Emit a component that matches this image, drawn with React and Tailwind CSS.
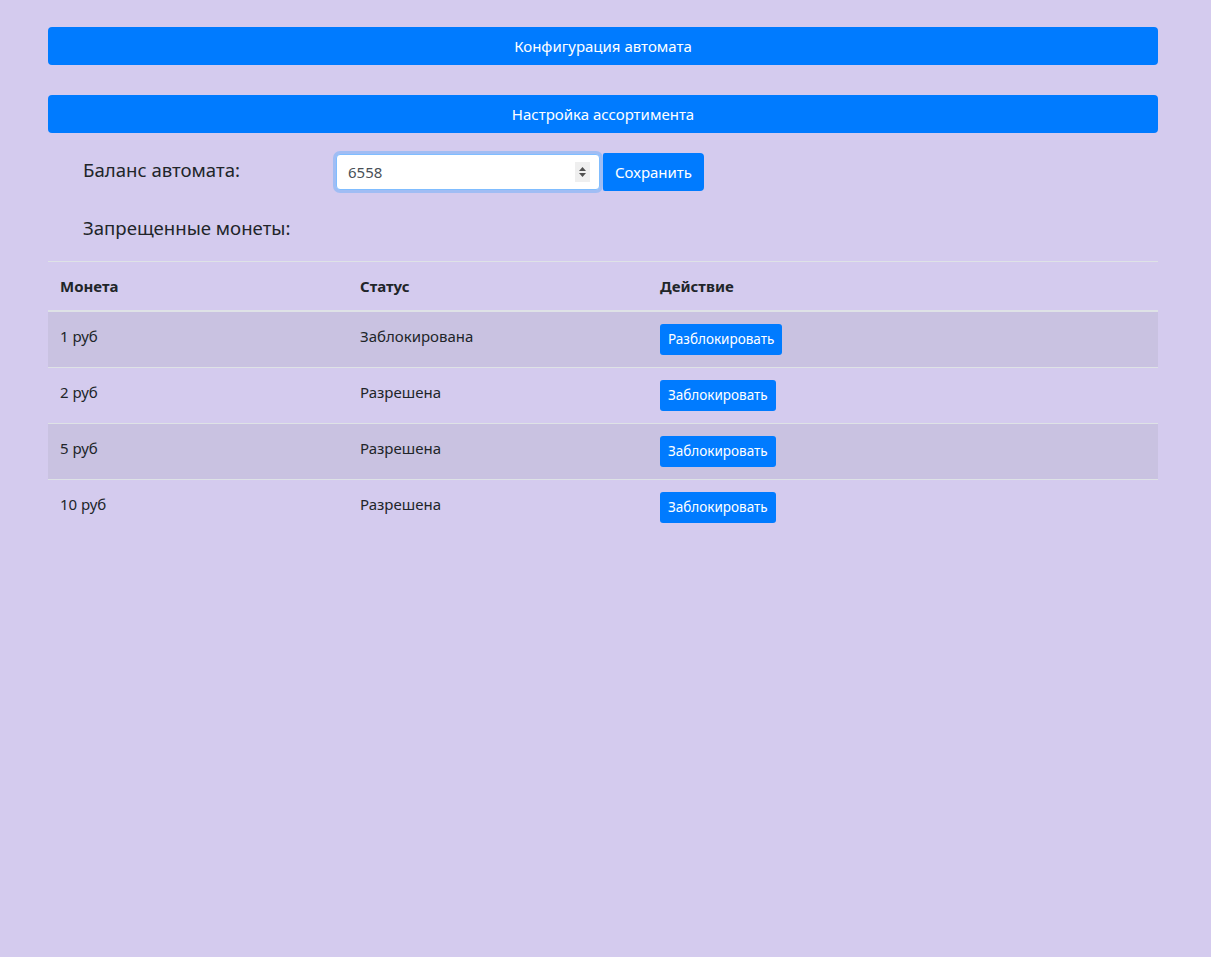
import React from "react";

const font = { fontFamily: '"Noto Sans", "Open Sans", sans-serif' };

function Row({ coin, status, action, striped, first }) {
  return (
    <div className={`flex ${first ? "h-[55px]" : "h-[56px] border-t border-[#dee2e6]"} text-[15px] text-[#212529] ${striped ? "bg-[#c9c2e1]" : ""}`}>
      <div className="w-[300px] px-3 pt-[12px] leading-6">{coin}</div>
      <div className="w-[300px] px-3 pt-[12px] leading-6">{status}</div>
      <div className="flex-1 px-3 pt-[12px]">
        <button className="h-[31px] px-2 rounded-[3px] bg-[#007bff] text-white text-[13.5px] leading-none">{action}</button>
      </div>
    </div>
  );
}

export default function App() {
  return (
    <div className="min-h-[957px] bg-[#d4cbee]" style={font}>
      <div className="pl-[48px] pt-[27px] w-[1158px]">
        <button className="w-[1110px] h-[38px] rounded-[4px] bg-[#007bff] text-white text-[15px] block">Конфигурация автомата</button>
        <button className="w-[1110px] h-[38px] rounded-[4px] bg-[#007bff] text-white text-[15px] block mt-[30px]">Настройка ассортимента</button>

        <div className="flex items-start mt-[18px]">
          <div className="w-[285px] pl-[35px] pt-[4px] text-[18.6px] leading-[30px] text-[#212529]">Баланс автомата:</div>
          <div className="relative w-[270px] h-[42px] rounded-[7px] bg-[#a0bdf4] p-[3px]">
            <div className="h-full w-full bg-white rounded-[4px] border border-[#80bdff] flex items-center pl-[11px] text-[15px] text-[#495057]">6558</div>
            <div className="absolute right-[13px] top-[11px] w-[15px] h-[20px] bg-[#efefef] flex items-center justify-center">
              <svg width="9" height="16" viewBox="0 0 9 16">
                <path d="M4.5 3 L8 7 L1 7 Z" fill="#505050" />
                <path d="M4.5 13 L8 9 L1 9 Z" fill="#505050" />
              </svg>
            </div>
          </div>
          <button className="h-[38px] mt-[2px] px-3 rounded-r-[4px] rounded-l-[2px] bg-[#007bff] text-white text-[15px]">Сохранить</button>
        </div>

        <div className="pl-[35px] mt-[20px] text-[18.6px] leading-[30px] text-[#212529]">Запрещенные монеты:</div>

        <div className="mt-[18px] w-[1110px]">
          <div className="flex border-t border-[#dee2e6] border-b-2 h-[51px] text-[15px] font-bold text-[#212529]">
            <div className="w-[300px] px-3 pt-[12px] leading-6">Монета</div>
            <div className="w-[300px] px-3 pt-[12px] leading-6">Статус</div>
            <div className="flex-1 px-3 pt-[12px] leading-6">Действие</div>
          </div>
          <Row coin="1 руб" status="Заблокирована" action="Разблокировать" striped first />
          <Row coin="2 руб" status="Разрешена" action="Заблокировать" />
          <Row coin="5 руб" status="Разрешена" action="Заблокировать" striped />
          <Row coin="10 руб" status="Разрешена" action="Заблокировать" />
        </div>
      </div>
    </div>
  );
}
